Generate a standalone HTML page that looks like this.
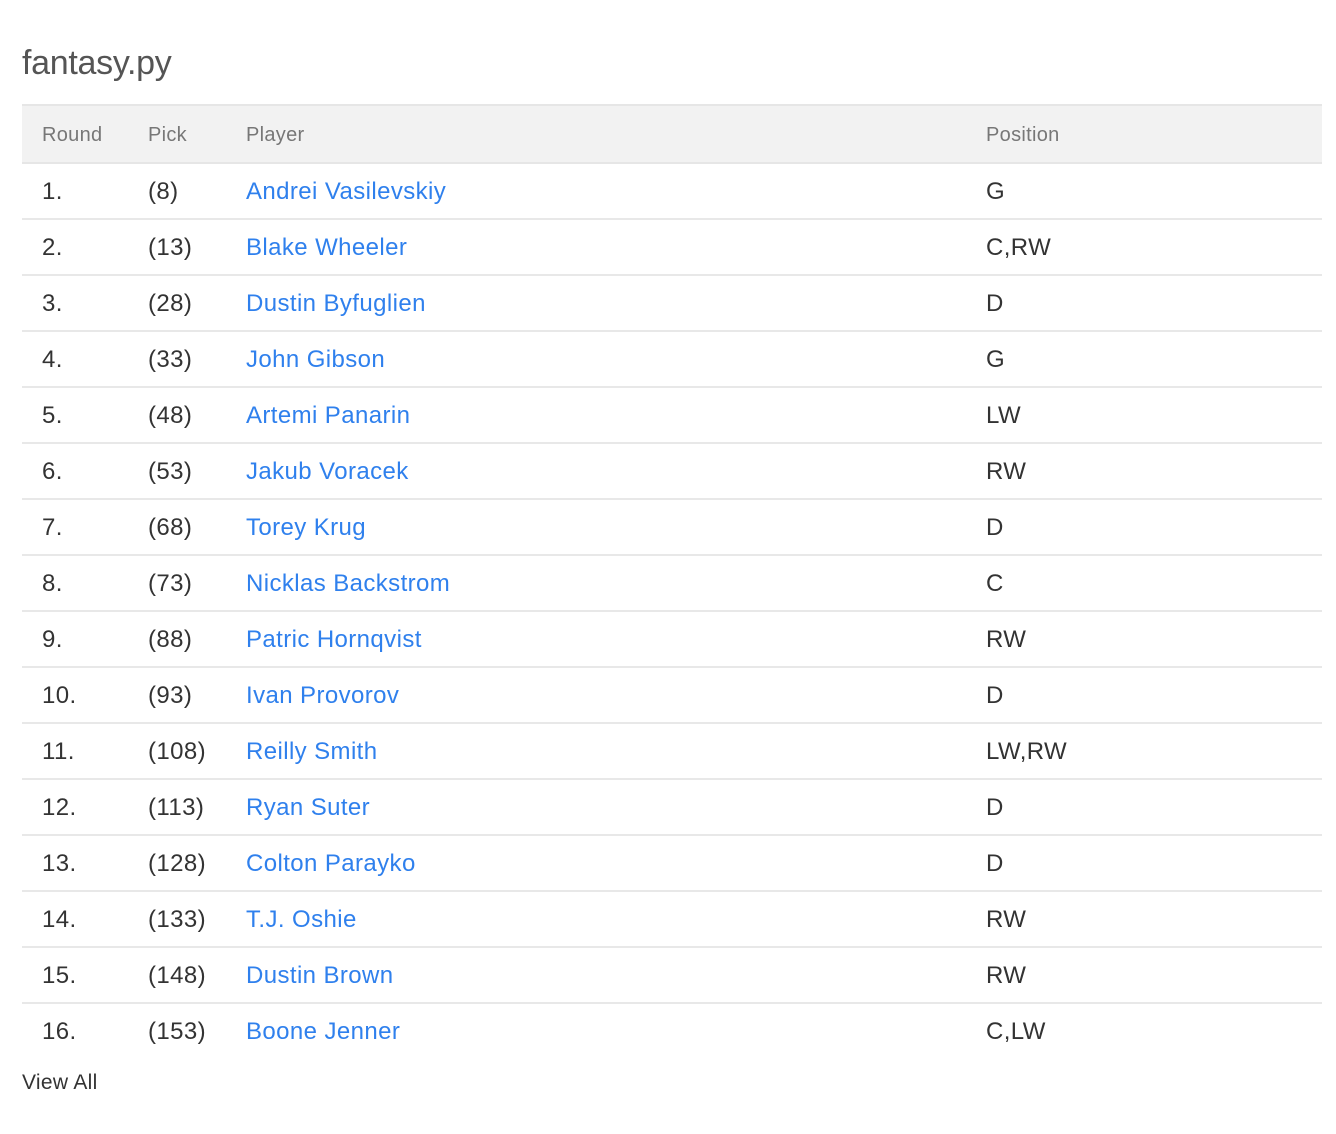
<!DOCTYPE html>
<html><head><meta charset="utf-8"><style>
*{margin:0;padding:0;box-sizing:border-box}
body{width:1336px;height:1134px;background:#fff;font-family:"Liberation Sans",Helvetica,Arial,sans-serif;color:#333;position:relative;overflow:hidden}
h1{position:absolute;left:22px;top:43px;font-size:34px;font-weight:300;color:#555;line-height:40px;letter-spacing:-0.3px}
.hdr{position:absolute;left:22px;top:104px;width:1300px;height:60px;background:#f2f2f2;border-top:2px solid #e6e6e6;border-bottom:2px solid #e6e6e6;font-size:20px;color:#777;letter-spacing:0.3px}
.row{position:absolute;left:22px;width:1300px;height:56px;font-size:24px;color:#333;border-top:2px solid #e8e8e8;letter-spacing:0.4px}
.c{position:absolute;white-space:nowrap}
.hdr .c{top:18px}
.row .c{top:14px}
.a{color:#2f80ed}
.va{position:absolute;left:22px;top:1071px;font-size:21px;color:#333;letter-spacing:0.3px}
</style></head><body>
<h1>fantasy.py</h1>
<div class="hdr"><span class="c" style="left:20px">Round</span><span class="c" style="left:126px">Pick</span><span class="c" style="left:224px">Player</span><span class="c" style="left:964px">Position</span></div>
<div class="row" style="top:164px;border-top:none"><span class="c" style="left:20px">1.</span><span class="c" style="left:126px">(8)</span><span class="c a" style="left:224px">Andrei Vasilevskiy</span><span class="c" style="left:964px">G</span></div>
<div class="row" style="top:218px"><span class="c" style="left:20px">2.</span><span class="c" style="left:126px">(13)</span><span class="c a" style="left:224px">Blake Wheeler</span><span class="c" style="left:964px">C,RW</span></div>
<div class="row" style="top:274px"><span class="c" style="left:20px">3.</span><span class="c" style="left:126px">(28)</span><span class="c a" style="left:224px">Dustin Byfuglien</span><span class="c" style="left:964px">D</span></div>
<div class="row" style="top:330px"><span class="c" style="left:20px">4.</span><span class="c" style="left:126px">(33)</span><span class="c a" style="left:224px">John Gibson</span><span class="c" style="left:964px">G</span></div>
<div class="row" style="top:386px"><span class="c" style="left:20px">5.</span><span class="c" style="left:126px">(48)</span><span class="c a" style="left:224px">Artemi Panarin</span><span class="c" style="left:964px">LW</span></div>
<div class="row" style="top:442px"><span class="c" style="left:20px">6.</span><span class="c" style="left:126px">(53)</span><span class="c a" style="left:224px">Jakub Voracek</span><span class="c" style="left:964px">RW</span></div>
<div class="row" style="top:498px"><span class="c" style="left:20px">7.</span><span class="c" style="left:126px">(68)</span><span class="c a" style="left:224px">Torey Krug</span><span class="c" style="left:964px">D</span></div>
<div class="row" style="top:554px"><span class="c" style="left:20px">8.</span><span class="c" style="left:126px">(73)</span><span class="c a" style="left:224px">Nicklas Backstrom</span><span class="c" style="left:964px">C</span></div>
<div class="row" style="top:610px"><span class="c" style="left:20px">9.</span><span class="c" style="left:126px">(88)</span><span class="c a" style="left:224px">Patric Hornqvist</span><span class="c" style="left:964px">RW</span></div>
<div class="row" style="top:666px"><span class="c" style="left:20px">10.</span><span class="c" style="left:126px">(93)</span><span class="c a" style="left:224px">Ivan Provorov</span><span class="c" style="left:964px">D</span></div>
<div class="row" style="top:722px"><span class="c" style="left:20px">11.</span><span class="c" style="left:126px">(108)</span><span class="c a" style="left:224px">Reilly Smith</span><span class="c" style="left:964px">LW,RW</span></div>
<div class="row" style="top:778px"><span class="c" style="left:20px">12.</span><span class="c" style="left:126px">(113)</span><span class="c a" style="left:224px">Ryan Suter</span><span class="c" style="left:964px">D</span></div>
<div class="row" style="top:834px"><span class="c" style="left:20px">13.</span><span class="c" style="left:126px">(128)</span><span class="c a" style="left:224px">Colton Parayko</span><span class="c" style="left:964px">D</span></div>
<div class="row" style="top:890px"><span class="c" style="left:20px">14.</span><span class="c" style="left:126px">(133)</span><span class="c a" style="left:224px">T.J. Oshie</span><span class="c" style="left:964px">RW</span></div>
<div class="row" style="top:946px"><span class="c" style="left:20px">15.</span><span class="c" style="left:126px">(148)</span><span class="c a" style="left:224px">Dustin Brown</span><span class="c" style="left:964px">RW</span></div>
<div class="row" style="top:1002px"><span class="c" style="left:20px">16.</span><span class="c" style="left:126px">(153)</span><span class="c a" style="left:224px">Boone Jenner</span><span class="c" style="left:964px">C,LW</span></div>
<div class="va">View All</div>
</body></html>
